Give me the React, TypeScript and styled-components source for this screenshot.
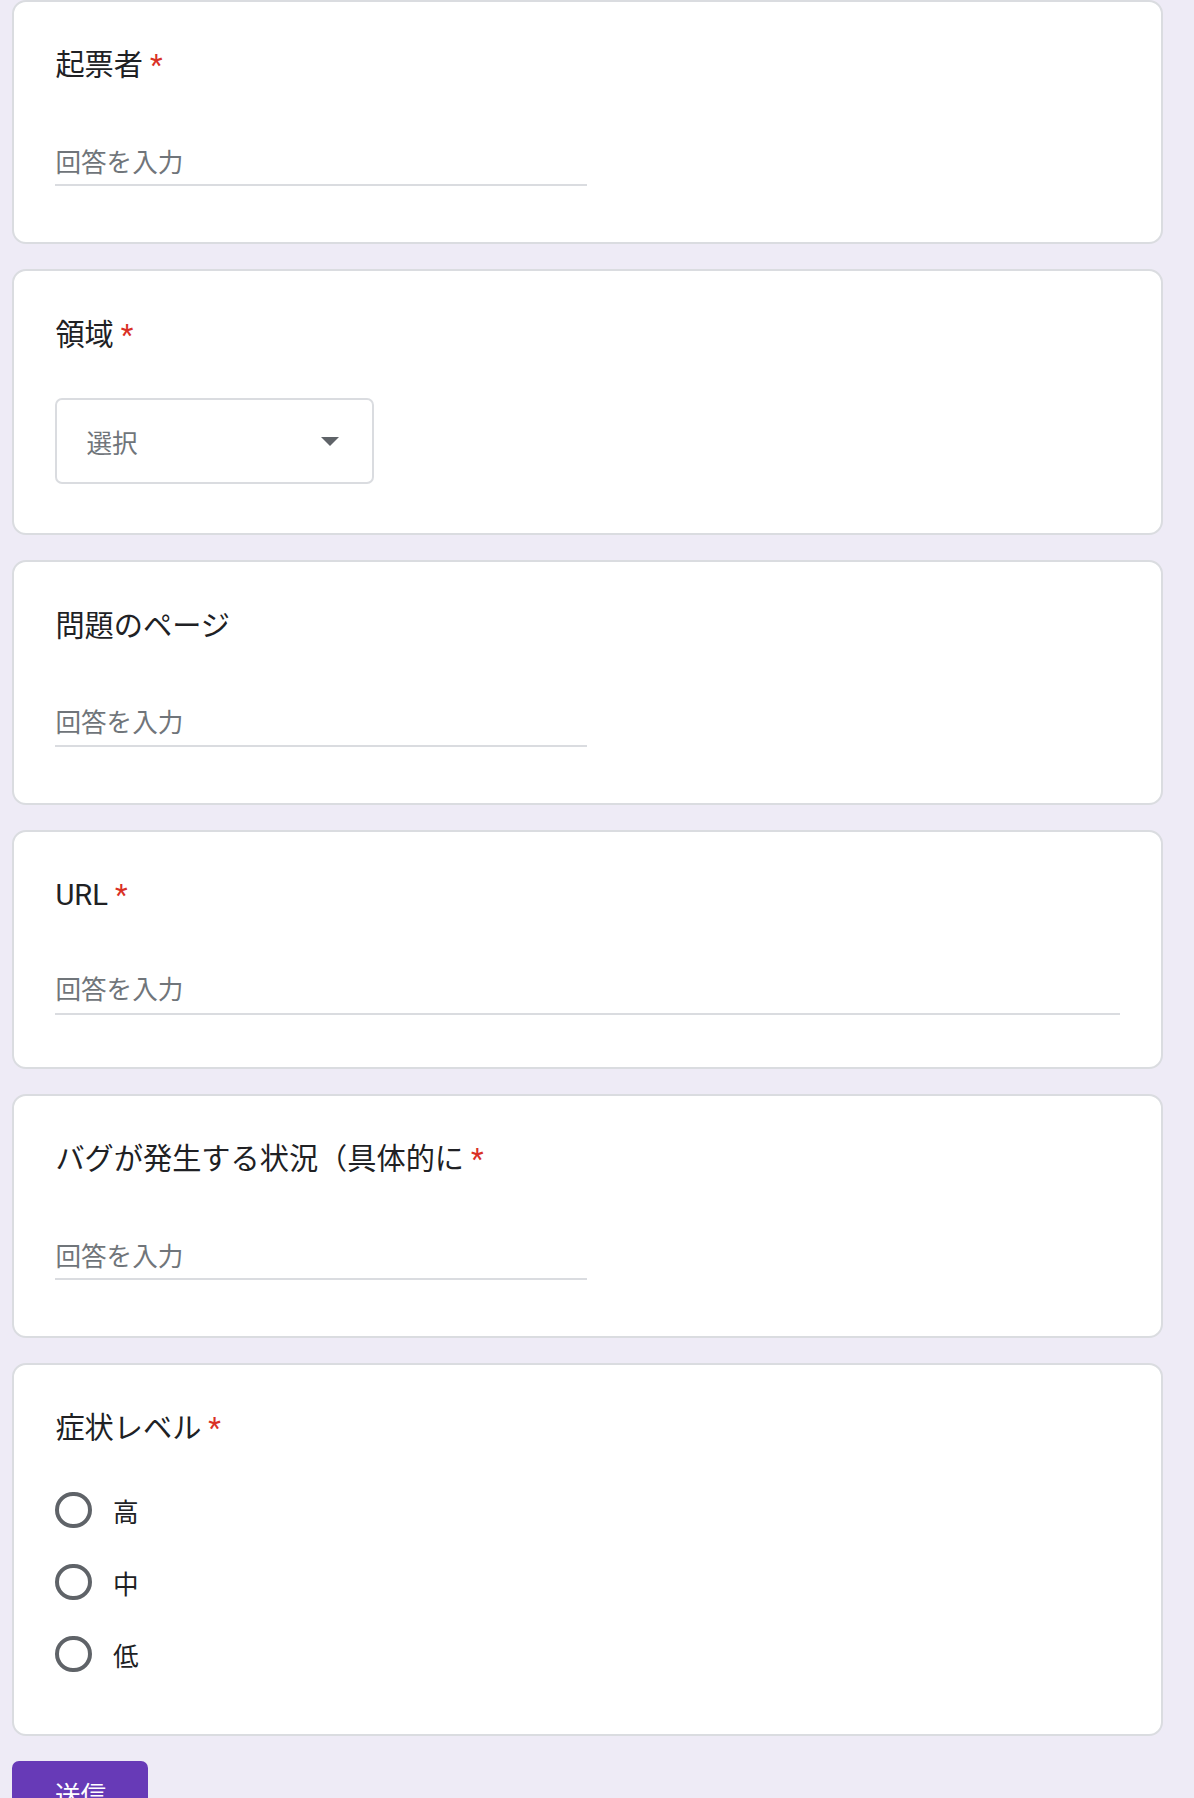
import styled, { createGlobalStyle } from "styled-components";

const GlobalStyle = createGlobalStyle`
  * {
    box-sizing: border-box;
  }
  body {
    margin: 0;
    background: #eeebf6;
    font-family: Roboto, "Noto Sans CJK JP", "Noto Sans", sans-serif;
    color: #202124;
  }
`;

const Page = styled.main`
  display: flex;
  flex-direction: column;
  gap: 25px;
  padding: 0 31px 40px 12px;
`;

const Card = styled.section<{ $pb: number }>`
  background: #ffffff;
  border: 2px solid #dadce0;
  border-radius: 14px;
  padding: 42.4px 41.4px ${(p) => p.$pb}px;
`;

const Title = styled.div`
  font-size: 29.2px;
  line-height: 43.2px;
  color: #202124;
  white-space: nowrap;
`;

const Required = styled.span`
  color: #d93025;
  margin-left: 7px;
`;

const AnswerField = styled.div<{ $full?: boolean }>`
  margin-top: ${(p) => (p.$full ? 40.4 : 41.9)}px;
  width: ${(p) => (p.$full ? "100%" : "532px")};
  height: 57px;
  border-bottom: 2px solid #dadce0;
  display: flex;
  align-items: flex-end;
  padding-bottom: ${(p) => (p.$full ? 5 : 3.5)}px;
  font-size: 25.6px;
  line-height: 36px;
  color: #70757a;
`;

const Select = styled.div`
  margin-top: 41.6px;
  width: 319px;
  height: 86px;
  border: 2px solid #dadce0;
  border-radius: 7px;
  display: flex;
  align-items: center;
  justify-content: space-between;
  padding: 0 33px 0 29px;
  font-size: 25.6px;
  color: #70757a;
`;

const RadioList = styled.div`
  margin-top: 23.6px;
  display: flex;
  flex-direction: column;
`;

const RadioRow = styled.label`
  height: 72px;
  display: flex;
  align-items: center;
  gap: 21px;
  font-size: 25.6px;
  color: #202124;
`;

const RadioCircle = styled.span`
  width: 36.6px;
  height: 36.6px;
  border-radius: 50%;
  border: 4px solid #5f6368;
  flex-shrink: 0;
`;

const SubmitButton = styled.button`
  align-self: flex-start;
  width: 135.5px;
  height: 65px;
  border: none;
  border-radius: 7px;
  background: #673ab7;
  color: #ffffff;
  font-family: inherit;
  font-size: 25.6px;
  padding: 0 0 0 43px;
  text-align: left;
  white-space: nowrap;
`;

const QuestionTitle = ({ text, required }: { text: string; required?: boolean }) => (
  <Title>
    {text}
    {required && <Required>*</Required>}
  </Title>
);

const TextQuestion = ({
  title,
  required,
  full,
}: {
  title: string;
  required?: boolean;
  full?: boolean;
}) => (
  <Card $pb={full ? 52 : 55.8}>
    <QuestionTitle text={title} required={required} />
    <AnswerField $full={full}>回答を入力</AnswerField>
  </Card>
);

const DropArrow = () => (
  <svg width="18" height="9" viewBox="0 0 10 5">
    <path d="M0 0 L5 5 L10 0 Z" fill="#5f6368" />
  </svg>
);

const levels = ["高", "中", "低"];

export default function App() {
  return (
    <>
      <GlobalStyle />
      <Page>
        <TextQuestion title="起票者" required />
        <Card $pb={48.8}>
          <QuestionTitle text="領域" required />
          <Select>
            <span>選択</span>
            <DropArrow />
          </Select>
        </Card>
        <TextQuestion title="問題のページ" />
        <TextQuestion title="URL" required full />
        <TextQuestion title="バグが発生する状況（具体的に" required />
        <Card $pb={43.8}>
          <QuestionTitle text="症状レベル" required />
          <RadioList>
            {levels.map((l) => (
              <RadioRow key={l}>
                <RadioCircle />
                {l}
              </RadioRow>
            ))}
          </RadioList>
        </Card>
        <SubmitButton>送信</SubmitButton>
      </Page>
    </>
  );
}
